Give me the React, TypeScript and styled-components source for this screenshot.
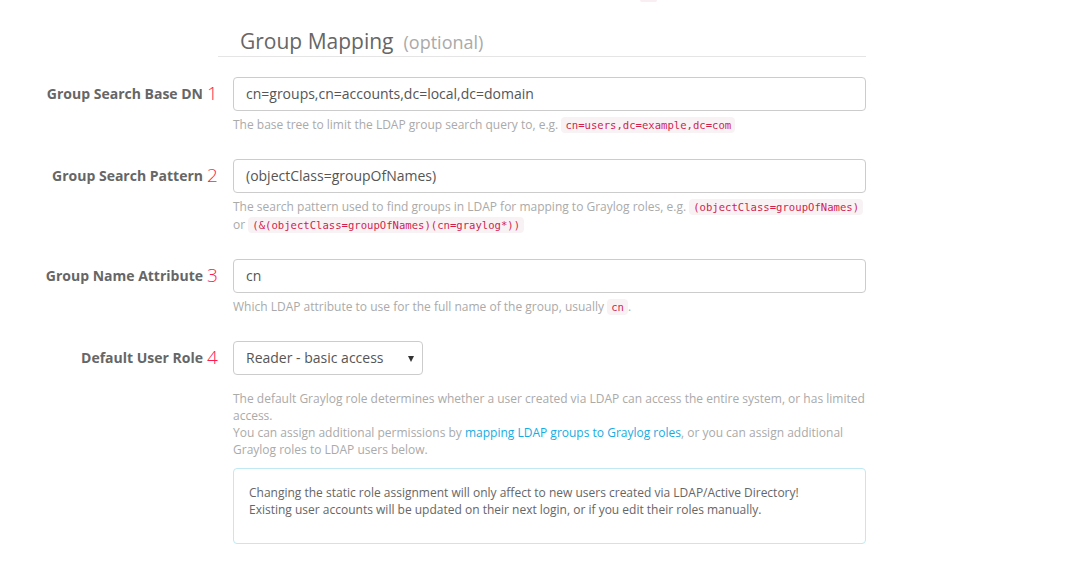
import React from "react";
import styled, { createGlobalStyle } from "styled-components";

const Global = createGlobalStyle`
  html, body { margin: 0; padding: 0; background: #fff; }
  body { font-family: "Open Sans", "DejaVu Sans", sans-serif; color: #666; font-size: 12px; }
  * { box-sizing: border-box; }
`;

const Page = styled.div`
  width: 1079px;
  height: 571px;
  overflow: hidden;
  position: relative;
`;

const TopStrip = styled.div`
  height: 28px;
  padding-left: 640px;
`;

const CutCode = styled.span`
  display: block;
  width: 17px;
  height: 2px;
  background: #f9eef1;
  border-radius: 0 0 3px 3px;
`;

const Legend = styled.div`
  margin-left: 218px;
  width: 648px;
  border-bottom: 1px solid #e5e5e5;
  padding: 0 0 2px 22px;
  display: flex;
  align-items: baseline;
  gap: 10px;
`;

const Title = styled.h2`
  margin: 0;
  font-size: 21px;
  font-weight: 400;
  color: #666;
  line-height: 26px;
`;

const Optional = styled.small`
  font-size: 18px;
  color: #aaa;
`;

const Form = styled.div`
  padding-top: 20px;
`;

const Group = styled.div<{ $mb?: number }>`
  display: grid;
  grid-template-columns: 203px 30px 633px;
  align-items: start;
  margin-bottom: ${(p) => p.$mb ?? 15}px;
`;

const Label = styled.label`
  text-align: right;
  font-weight: 700;
  font-size: 14px;
  color: #666;
  line-height: 20px;
  padding-top: 7px;
  white-space: nowrap;
`;

const Num = styled.span`
  padding-left: 4px;
  font-size: 19px;
  line-height: 20px;
  padding-top: 6px;
  color: #ff1a52;
  font-weight: 300;
`;

const Field = styled.div`
  display: flex;
  flex-direction: column;
`;

const Input = styled.div`
  height: 34px;
  border: 1px solid #ccc;
  border-radius: 4px;
  padding: 6px 12px;
  font-size: 14px;
  line-height: 20px;
  color: #555;
  background: #fff;
`;

const SelectBox = styled.div`
  position: relative;
  width: 190px;
  height: 34px;
  border: 1px solid #ccc;
  border-radius: 4px;
  padding: 6px 12px;
  font-size: 14px;
  line-height: 20px;
  color: #555;
  background: #fff;
`;

const Caret = styled.span`
  position: absolute;
  right: 8px;
  top: 14px;
  width: 0;
  height: 0;
  border-left: 3.5px solid transparent;
  border-right: 3.5px solid transparent;
  border-top: 6px solid #333;
`;

const Help = styled.p<{ $mt?: number; $lh?: number }>`
  margin: ${(p) => p.$mt ?? 5}px 0 10px;
  font-size: 12px;
  line-height: ${(p) => p.$lh ?? 17}px;
  color: #aaa;
`;

const Code = styled.code`
  font-family: "DejaVu Sans Mono", "Liberation Mono", monospace;
  font-size: 10.6px;
  color: #d01f4f;
  background: #f9f2f4;
  border-radius: 4px;
  padding: 2px 4px;
`;

const Link = styled.a`
  color: #16ace3;
  text-decoration: none;
`;

const Alert = styled.div`
  border: 1px solid #bfe9f3;
  border-radius: 4px;
  padding: 15px 15px 25px;
  font-size: 12px;
  line-height: 17px;
  color: #666;
`;

export default function App() {
  return (
    <Page>
      <Global />
      <TopStrip>
        <CutCode />
      </TopStrip>
      <Legend>
        <Title>Group Mapping</Title>
        <Optional>(optional)</Optional>
      </Legend>
      <Form>
        <Group>
          <Label>Group Search Base DN</Label>
          <Num>1</Num>
          <Field>
            <Input>cn=groups,cn=accounts,dc=local,dc=domain</Input>
            <Help>
              The base tree to limit the LDAP group search query to, e.g.{" "}
              <Code>cn=users,dc=example,dc=com</Code>
            </Help>
          </Field>
        </Group>
        <Group>
          <Label>Group Search Pattern</Label>
          <Num>2</Num>
          <Field>
            <Input>(objectClass=groupOfNames)</Input>
            <Help $lh={18}>
              The search pattern used to find groups in LDAP for mapping to Graylog roles, e.g.{" "}
              <Code>(objectClass=groupOfNames)</Code> or{" "}
              <Code>(&amp;(objectClass=groupOfNames)(cn=graylog*))</Code>
            </Help>
          </Field>
        </Group>
        <Group>
          <Label>Group Name Attribute</Label>
          <Num>3</Num>
          <Field>
            <Input>cn</Input>
            <Help>
              Which LDAP attribute to use for the full name of the group, usually <Code>cn</Code>.
            </Help>
          </Field>
        </Group>
        <Group>
          <Label>Default User Role</Label>
          <Num>4</Num>
          <Field>
            <SelectBox>
              Reader - basic access
              <Caret />
            </SelectBox>
            <Help $mt={15}>
              The default Graylog role determines whether a user created via LDAP can access the entire system, or has
              limited access.
              <br />
              You can assign additional permissions by <Link>mapping LDAP groups to Graylog roles</Link>, or you can
              assign additional Graylog roles to LDAP users below.
            </Help>
            <Alert>
              Changing the static role assignment will only affect to new users created via LDAP/Active Directory!
              <br />
              Existing user accounts will be updated on their next login, or if you edit their roles manually.
            </Alert>
          </Field>
        </Group>
      </Form>
    </Page>
  );
}
